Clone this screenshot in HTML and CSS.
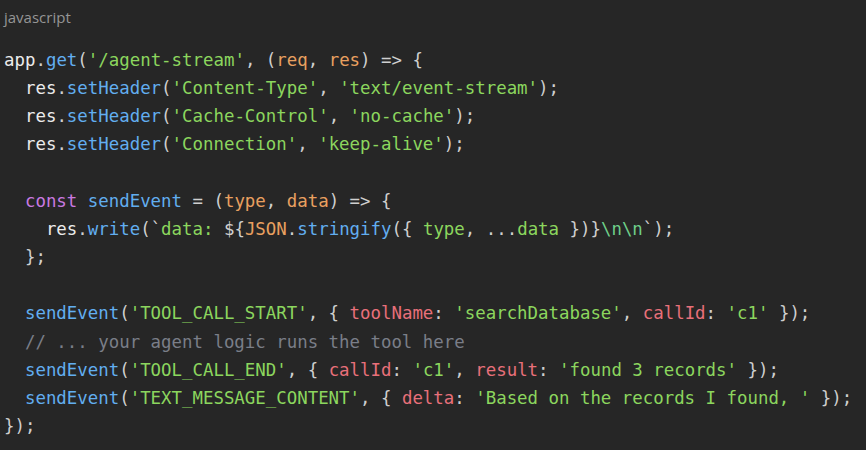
FILE: index.html
```html
<!DOCTYPE html>
<html>
<head>
<meta charset="utf-8">
<link rel="stylesheet" href="styles.css">
</head>
<body>
<div class="block">
<div class="lang">javascript</div>
<pre class="code"><span class="v">app</span>.<span class="f">get</span>(<span class="s">'/agent-stream'</span>, (<span class="p">req</span>, <span class="p">res</span>) =&gt; {
  <span class="v">res</span>.<span class="f">setHeader</span>(<span class="s">'Content-Type'</span>, <span class="s">'text/event-stream'</span>);
  <span class="v">res</span>.<span class="f">setHeader</span>(<span class="s">'Cache-Control'</span>, <span class="s">'no-cache'</span>);
  <span class="v">res</span>.<span class="f">setHeader</span>(<span class="s">'Connection'</span>, <span class="s">'keep-alive'</span>);

  <span class="k">const</span> <span class="f">sendEvent</span> = (<span class="p">type</span>, <span class="p">data</span>) =&gt; {
    <span class="v">res</span>.<span class="f">write</span>(`<span class="s">data: </span>${<span class="p">JSON</span>.<span class="f">stringify</span>({ <span class="s">type</span>, ...<span class="s">data</span> })}<span class="e">\n\n</span>`);
  };

  <span class="f">sendEvent</span>(<span class="s">'TOOL_CALL_START'</span>, { <span class="r">toolName</span>: <span class="s">'searchDatabase'</span>, <span class="r">callId</span>: <span class="s">'c1'</span> });
  <span class="c">// ... your agent logic runs the tool here</span>
  <span class="f">sendEvent</span>(<span class="s">'TOOL_CALL_END'</span>, { <span class="r">callId</span>: <span class="s">'c1'</span>, <span class="r">result</span>: <span class="s">'found 3 records'</span> });
  <span class="f">sendEvent</span>(<span class="s">'TEXT_MESSAGE_CONTENT'</span>, { <span class="r">delta</span>: <span class="s">'Based on the records I found, '</span> });
});</pre>
</div>
</body>
</html>
```

FILE: styles.css
```css
html, body {
  margin: 0;
  padding: 0;
  background: #262626;
}
.block {
  padding: 7px 4px 0 4px;
}
.lang {
  font-family: "Open Sans", "Liberation Sans", sans-serif;
  font-size: 15px;
  line-height: 20px;
  color: #959595;
  margin-bottom: 19px;
}
.code {
  margin: 0;
  font-family: "DejaVu Sans Mono", monospace;
  font-size: 17.4px;
  line-height: 28.15px;
  color: #cfcfcf;
  white-space: pre;
}
.v { color: #ececec; }
.f { color: #62aef0; }
.s { color: #8cd65e; }
.p { color: #e9a060; }
.k { color: #c979e0; }
.r { color: #e8707a; }
.c { color: #7a7e88; }
.e { color: #6fcf8a; }
```
